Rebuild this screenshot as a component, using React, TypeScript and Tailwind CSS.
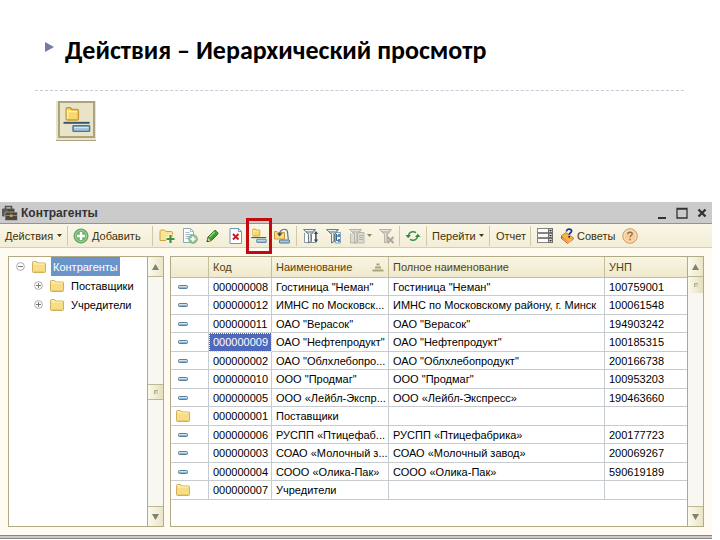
import type { ReactNode } from "react";
import clsx from "clsx";

type Row = {
  code: string;
  name: string;
  fullName?: string;
  unp?: string;
  isGroup?: boolean;
};

const rows: Row[] = [
  { code: "000000008", name: 'Гостиница "Неман"', fullName: 'Гостиница "Неман"', unp: "100759001" },
  { code: "000000012", name: "ИМНС по Московск...", fullName: "ИМНС по Московскому району, г. Минск", unp: "100061548" },
  { code: "000000011", name: 'ОАО "Верасок"', fullName: 'ОАО "Верасок"', unp: "194903242" },
  { code: "000000009", name: 'ОАО "Нефтепродукт"', fullName: 'ОАО "Нефтепродукт"', unp: "100185315" },
  { code: "000000002", name: 'ОАО "Облхлебопро...', fullName: 'ОАО "Облхлебопродукт"', unp: "200166738" },
  { code: "000000010", name: 'ООО "Продмаг"', fullName: 'ООО "Продмаг"', unp: "100953203" },
  { code: "000000005", name: "ООО «Лейбл-Экспр...", fullName: "ООО «Лейбл-Экспресс»", unp: "190463660" },
  { code: "000000001", name: "Поставщики", isGroup: true },
  { code: "000000006", name: "РУСПП «Птицефаб...", fullName: "РУСПП «Птицефабрика»", unp: "200177723" },
  { code: "000000003", name: "СОАО «Молочный з...", fullName: "СОАО «Молочный завод»", unp: "200069267" },
  { code: "000000004", name: "СООО «Олика-Пак»", fullName: "СООО «Олика-Пак»", unp: "590619189" },
  { code: "000000007", name: "Учредители", isGroup: true },
];

const selectedCode = "000000009";

function Svg({ children, size = 16 }: { children: ReactNode; size?: number }) {
  return (
    <svg width={size} height={size} viewBox="0 0 16 16" fill="none" aria-hidden="true" className="shrink-0">
      {children}
    </svg>
  );
}

function FolderIcon() {
  return (
    <Svg>
      <path d="M1.500 3.500q0-1 1-1h3l1.500 1.500h6.500q1 0 1 1v7.500q0 1-1 1h-11q-1 0-1-1z" fill="#f7de85" stroke="#cfae5c" />
      <path d="M2.500 5h11M2.500 3.800h3" stroke="#fdf2b8" />
      <path d="M2.500 12.500h11" stroke="#eccb70" />
    </Svg>
  );
}

function ItemIcon() {
  return (
    <Svg>
      <rect x="3.500" y="6.500" width="9" height="3" rx="1" fill="#8fb7d2" stroke="#55809f" />
      <path d="M4 7.500h8" stroke="#cfe3ef" />
    </Svg>
  );
}

function HierarchyIcon({ size }: { size?: number }) {
  return (
    <Svg size={size}>
      <path d="M1.800 1.800q0-.8.700-.8h1.800l.7 1h3q.8 0 .8.700v4.600q0 .7-.7.700h-5.500q-.8 0-.8-.7z" fill="#f6d968" stroke="#c79a35" strokeWidth=".8" />
      <path d="M2.500 3.200h5.600M2.600 2.200v5" stroke="#fff3b5" strokeWidth=".8" />
      <path d="M.3 9.600h14.900" stroke="#33566b" strokeWidth="1.100" />
      <rect x="5.700" y="11.300" width="9.500" height="3.200" rx=".4" fill="#9fc0db" stroke="#4c7692" strokeWidth=".8" />
      <path d="M6.300 12.300h8.200" stroke="#d3e5f2" strokeWidth=".7" />
    </Svg>
  );
}

function AddIcon() {
  return (
    <Svg>
      <circle cx="8" cy="8" r="7" fill="#6fb46b" stroke="#5a9a62" />
      <circle cx="8" cy="8" r="5.700" stroke="#a5d49c" />
      <path d="M8 4v8M4 8h8" stroke="#fff" strokeWidth="2.400" />
    </Svg>
  );
}

function FolderAddIcon() {
  return (
    <Svg>
      <path d="M1 3.500q0-1.500 1.300-1.500h3.200l1.500 1.500h5.500q1 0 1 1v8h-12.500z" fill="#f9e39a" stroke="#d0a03c" />
      <path d="M11.500 6.500v9M7 11h9" stroke="#fff8dd" strokeWidth="4" />
      <path d="M11.500 7v8M7.500 11h8" stroke="#3d9140" strokeWidth="2.200" />
    </Svg>
  );
}

function PageAddIcon() {
  return (
    <Svg>
      <path d="M1.500.5h7l3 3v11h-10z" fill="#fff" stroke="#8fa9b8" />
      <path d="M8.500.5v3h3M3.500 4.500h4M3.500 6.500h6M3.500 8.500h4M3.500 10.500h3" stroke="#a5bac6" />
      <circle cx="11" cy="11" r="4.300" fill="#9cc698" stroke="#7bab7d" />
      <path d="M11 8.500v5M8.500 11h5" stroke="#fff" strokeWidth="1.600" />
    </Svg>
  );
}

function PencilIcon() {
  return (
    <Svg>
      <path d="M2 13.500l1-4.500 6-6q1-1 2.200 0l1.300 1.300q1 1 0 2.200l-6 6z" fill="#3f9f35" stroke="#2d7429" />
      <path d="M4.500 9l5.200-5.200" stroke="#93d77c" strokeWidth="1.500" />
      <path d="M3 9.500l3.200 3.200L2 13.800z" fill="#ecd7a2" stroke="#466b35" strokeWidth=".6" />
      <path d="M2 14l.5-1.800 1.300 1.300z" fill="#222" />
    </Svg>
  );
}

function DeleteIcon() {
  return (
    <Svg>
      <path d="M2 .5h8.500l3 3v12h-11.500z" fill="#fff" stroke="#7296b4" />
      <path d="M10.500.5v3h3" stroke="#7296b4" />
      <path d="M5 6l5.500 5.500M10.500 6l-5.500 5.500" stroke="#c31f25" strokeWidth="2" />
    </Svg>
  );
}

function MoveIcon() {
  return (
    <Svg>
      <path d="M.5 3.500h2.500l1 1h6.500v6.500h-10z" fill="#f8dc83" stroke="#c99a3f" />
      <path d="M5.500 6.500c0-5 7-7.500 8-2.500l.8 7.500" stroke="#57778a" strokeWidth="1.200" />
      <path d="M3 5.200l2.500 3.300 3-3.300z" fill="#264b62" />
      <rect x="5.500" y="12" width="10" height="3" rx=".5" fill="#a9c9df" stroke="#4c7692" />
    </Svg>
  );
}

// shared funnel shape for the filter buttons
function Funnel({ muted }: { muted?: boolean }) {
  return (
    <>
      <path
        d="M.5 1.500h12l-4 5v7l-3 1.500V6.500z"
        fill={muted ? "#c4c4b9" : "#a3aeb0"}
        stroke={muted ? "#b3b3a6" : "#6f7e83"}
      />
      <path d="M2 2.500h8M6.500 5v8.500" stroke={muted ? "#e2e2d8" : "#e9eff0"} />
    </>
  );
}

function FilterSortIcon() {
  return (
    <Svg>
      <path d="M1.500 5v9.500h11V5" fill="#fff" stroke="#8496a0" />
      <Funnel />
      <path d="M13 4v9" stroke="#2f4c5c" strokeWidth="1.200" />
      <path d="M10.900 6L13 3l2.100 3zM10.900 11.500h4.200L13 14.800z" fill="#2f4c5c" />
    </Svg>
  );
}

function FilterItemIcon() {
  return (
    <Svg>
      <path d="M9.500 4.500h5v10.500h-5z" fill="#eaf3f9" stroke="#7fa6c0" />
      <Funnel />
      <path d="M10.500 6v6.500h2M10.500 8h2" stroke="#3e6580" />
      <rect x="12" y="6" width="2" height="3" fill="#4c8fbd" />
      <rect x="12" y="11" width="2" height="3" fill="#4c8fbd" />
    </Svg>
  );
}

function FilterHistoryIcon() {
  return (
    <Svg>
      <path d="M8.500 4.500h6.500v10.500h-13.500v-9.500" fill="#dcdcd2" stroke="#b7b7aa" />
      <Funnel muted />
      <path d="M10 7.500h4M10 9.500h4M10 11.500h4" stroke="#b0b0a4" />
    </Svg>
  );
}

function FilterOffIcon() {
  return (
    <Svg>
      <Funnel muted />
      <path d="M8.500 9l6 6M14.500 9l-6 6" stroke="#b3a29f" strokeWidth="2" />
    </Svg>
  );
}

function RefreshIcon() {
  return (
    <Svg>
      <path d="M3.500 7.500c.5-3.500 4.500-4.800 7.500-2.800M12.500 8.500c-.5 3.500-4.500 4.800-7.500 2.800" stroke="#3c9147" strokeWidth="1.600" />
      <path d="M.500 7h5.400L3.200 10.300zM10.100 9h5.400L12.800 5.700z" fill="#2f8a3c" />
    </Svg>
  );
}

function ListIcon() {
  return (
    <Svg>
      {[0, 5, 10].map((y) => (
        <g key={y}>
          <rect x=".5" y={y + 0.5} width="15" height="4" fill="#fff" stroke="#858585" />
          <rect x="11.500" y={y + 0.5} width="4" height="4" fill="#c9c9c9" stroke="#6f6f6f" />
          <path d={`M12.200 ${y + 2}h2.600l-1.300 1.500z`} fill="#222" />
        </g>
      ))}
    </Svg>
  );
}

function TipsIcon() {
  return (
    <Svg>
      <path d="M1 8l5-3.500 7.500 5.500-5.500 4.500z" fill="#f6b53b" stroke="#d98324" />
      <path d="M1 8v2.500l6.500 5.200 6-4.200V10L8 14z" fill="#d5441f" />
      <path d="M2 10l5.800 4.500 5-3.600" stroke="#fff0c9" strokeWidth=".8" />
      <path d="M6.500 3.500c0-3.500 5.500-3 5-.2-.3 1.600-2.300 1.700-2.300 3.500M9.200 8v1.800" stroke="#1b2f9c" strokeWidth="1.800" />
    </Svg>
  );
}

function HelpIcon() {
  return (
    <Svg>
      <circle cx="8" cy="8" r="7.300" fill="#f8cd9c" stroke="#d29a63" />
      <circle cx="8" cy="8" r="5.900" stroke="#fde2bd" />
      <path d="M5.800 6.300c0-3.200 4.700-2.700 4.400-.3-.2 1.400-2.200 1.500-2.200 3.300M8 10.700v1.500" stroke="#7d6248" strokeWidth="1.200" />
    </Svg>
  );
}

function BriefcaseIcon() {
  return (
    <Svg>
      <path d="M3.500 4.500V1.500h6v3" stroke="#55524b" strokeWidth="1.500" />
      <rect x="0" y="3.500" width="12.500" height="8" rx="1" fill="#5c5850" />
      <path d="M6.500 7.500V5.500h5v2" stroke="#403d37" strokeWidth="1.300" />
      <rect x="3" y="7" width="12.500" height="8.500" rx="1" fill="#4a4741" stroke="#cbcbcb" strokeWidth=".6" />
      <path d="M3.500 10.500h11.500" stroke="#8b857a" />
      <rect x="8" y="9.500" width="2.500" height="2.500" fill="#d8a33c" />
    </Svg>
  );
}

function ExpandIcon({ open }: { open?: boolean }) {
  return (
    <svg width="9" height="9" viewBox="0 0 9 9" fill="none" aria-hidden="true" className="shrink-0">
      <circle cx="4.500" cy="4.500" r="3.900" fill="#fff" stroke="#a3a3a3" strokeWidth=".9" />
      <path d={open ? "M2 4.500h5" : "M2 4.500h5M4.500 2v5"} stroke="#777" />
    </svg>
  );
}

function Caret({ muted }: { muted?: boolean }) {
  return (
    <svg width="5" height="3" viewBox="0 0 5 3" aria-hidden="true" className="shrink-0">
      <path d="M0 0h5L2.500 3z" fill={muted ? "#8f8358" : "#4a3b0a"} />
    </svg>
  );
}

function ToolGroup({ children, className }: { children: ReactNode; className?: string }) {
  return <div className={clsx("flex h-5 shrink-0 items-center gap-[7px] border-r border-[#cfc9a6]", className)}>{children}</div>;
}

function ToolButton({ children, label, className }: { children: ReactNode; label?: string; className?: string }) {
  return (
    <button type="button" aria-label={label} className={clsx("flex shrink-0 items-center whitespace-nowrap", className)}>
      {children}
    </button>
  );
}

function ScrollArrow({ down }: { down?: boolean }) {
  return (
    <button
      type="button"
      aria-label={down ? "Вниз" : "Вверх"}
      className={clsx(
        "flex h-5 w-full shrink-0 items-center justify-center border-[#bdb894] bg-linear-to-r from-[#fbf9ec] to-[#ebe5c8]",
        down ? "border-t" : "border-b"
      )}
    >
      <svg width="7" height="6" viewBox="0 0 7 6" aria-hidden="true">
        <path d={down ? "M0 0h7L3.500 6z" : "M0 6h7L3.500 0z"} fill="#82806f" />
      </svg>
    </button>
  );
}

function ScrollBar({ middle }: { middle?: boolean }) {
  return (
    <div className="flex w-4 shrink-0 flex-col border-l border-[#b0ab85] bg-[#f8f7f1]">
      <ScrollArrow />
      {middle && <div className="grow-5" />}
      <div
        className={clsx(
          "flex h-4 shrink-0 items-center justify-center bg-linear-to-r from-[#fbf9ec] to-[#e6dfbd]",
          middle && "border-y border-[#bdb894]"
        )}
      >
        <span className="size-1 border-t border-l border-[#b5af8c] bg-[#d8d3b4]" />
      </div>
      <div className="grow-5" />
      <ScrollArrow down />
    </div>
  );
}

function TreeItem({ label, open, selected, className }: { label: string; open?: boolean; selected?: boolean; className?: string }) {
  return (
    <li className={clsx("flex h-[19px] items-center", className)}>
      <ExpandIcon open={open} />
      <span className="ml-[6px] flex">
        <FolderIcon />
      </span>
      <span
        className={clsx(
          "ml-1 flex h-[19px] items-center px-[2px] text-[11px] leading-4",
          selected && "bg-[#6b94cb] text-white"
        )}
      >
        {label}
      </span>
    </li>
  );
}

function CounterpartyTable() {
  const head = "border-r border-b border-[#c5bf98] px-1 text-left font-normal text-[#55430a]";
  const cell = "border-r border-b border-[#c6ccd0] px-1 whitespace-nowrap overflow-hidden";

  return (
    <table className="w-full table-fixed border-separate border-spacing-0 text-[11px] leading-4">
      <colgroup>
        <col className="w-[38px]" />
        <col className="w-[63px]" />
        <col className="w-[117px]" />
        <col />
        <col className="w-[82px]" />
      </colgroup>
      <thead>
        <tr className="h-[21px] bg-linear-to-b from-[#f8f5e3] to-[#efe8cc]">
          <th className={head} aria-label="Вид" />
          <th className={head}>Код</th>
          <th className={head}>
            <span className="flex items-center justify-between">
              Наименование
              <svg width="12" height="9" viewBox="0 0 12 9" aria-hidden="true">
                <path d="M4.500 1.500h3M3 4.500h6M.500 7.500h11" stroke="#aaa37a" strokeWidth="2" />
              </svg>
            </span>
          </th>
          <th className={head}>Полное наименование</th>
          <th className="border-b border-[#c5bf98] px-1 text-left font-normal text-[#55430a]">УНП</th>
        </tr>
      </thead>
      <tbody>
        {rows.map((row) => {
          const isSelected = row.code === selectedCode;
          return (
            <tr key={row.code} className="h-[19px] odd:h-[18px]">
              <td className={cell}>
                {row.isGroup ? <FolderIcon /> : <ItemIcon />}
              </td>
              <td className={clsx(cell, isSelected && "bg-[#4f69bd] text-white outline-1 -outline-offset-1 outline-dotted outline-white")}>
                {row.code}
              </td>
              <td className={cell}>{row.name}</td>
              <td className={cell}>{row.fullName}</td>
              <td className="border-b border-[#c6ccd0] px-1">{row.unp}</td>
            </tr>
          );
        })}
      </tbody>
    </table>
  );
}

export default function App() {
  return (
    <main className="bg-white font-['Liberation_Sans',sans-serif] text-black">
      <header className="h-[202px] pt-[34px] pr-9 pl-[35px]">
        <div className="flex h-[57px] gap-[11px] border-b border-dashed border-[#c3ccd9] pl-[10px]">
          <svg width="9" height="10" viewBox="0 0 9 10" aria-hidden="true" className="mt-2 shrink-0">
            <path d="M0 0l9 5-9 5z" fill="#727ca3" />
          </svg>
          <h1 className="font-[Carlito,Lato,sans-serif] text-[26px] leading-8 font-bold whitespace-nowrap">
            Действия – Иерархический просмотр
          </h1>
        </div>
        <button
          type="button"
          aria-label="Иерархический просмотр"
          className="mt-[10px] ml-[21px] block size-10 border-b border-[#aaa37d] bg-[#e9e3ca] pr-px pb-[2px] pl-[2px]"
        >
          <span className="flex h-full items-center justify-center border-2 border-[#aaa37d]">
            <HierarchyIcon size={28} />
          </span>
        </button>
      </header>

      <section className="mr-2 bg-[#fffbf0]">
        <div className="flex h-[22px] items-center border-b border-[#96948a] bg-[#cbcbcb] pr-1 pl-[2px]">
          <BriefcaseIcon />
          <h2 className="ml-[3px] grow text-[12px] leading-4 font-bold text-[#333]">Контрагенты</h2>
          <div className="flex items-center gap-2 text-[#333]">
            {[
              { label: "Свернуть", d: "M2 11h8", w: 2 },
              { label: "Развернуть", d: "M1 1.500h10v9.500H1zM1 2h10", w: 1.3 },
              { label: "Закрыть", d: "M2.500 2.500l7 7M9.500 2.500l-7 7", w: 2.4 },
            ].map((item) => (
              <button key={item.label} type="button" aria-label={item.label}>
                <svg width="12" height="12" viewBox="0 0 12 12" fill="none" aria-hidden="true">
                  <path d={item.d} stroke="currentColor" strokeWidth={item.w} />
                </svg>
              </button>
            ))}
          </div>
        </div>

        <div className="flex h-6 items-center border-b border-[#d5cfad] bg-linear-to-b from-[#faf7e8] to-[#f2edd6] text-[11px] leading-4 text-[#3f3208]">
          <ToolGroup className="w-[68px] pl-[5px]">
            <ToolButton className="gap-1">
              Действия
              <Caret />
            </ToolButton>
          </ToolGroup>
          <ToolGroup className="w-[85px] pl-[5px]">
            <ToolButton className="gap-[3px]">
              <AddIcon />
              <span>
                <u>Д</u>обавить
              </span>
            </ToolButton>
          </ToolGroup>
          <ToolGroup className="w-[144px] pl-[6px]">
            <ToolButton label="Новая группа"><FolderAddIcon /></ToolButton>
            <ToolButton label="Скопировать"><PageAddIcon /></ToolButton>
            <ToolButton label="Изменить"><PencilIcon /></ToolButton>
            <ToolButton label="Пометить на удаление"><DeleteIcon /></ToolButton>
            <ToolButton label="Иерархический просмотр" className="relative">
              <HierarchyIcon />
              <span className="absolute -inset-x-[5px] -inset-y-[10px] border-3 border-[#c00c10]" />
            </ToolButton>
            <ToolButton label="Переместить в группу"><MoveIcon /></ToolButton>
          </ToolGroup>
          <ToolGroup className="w-[103px] pl-[6px]">
            <ToolButton label="Отбор и сортировка"><FilterSortIcon /></ToolButton>
            <ToolButton label="Отбор по значению"><FilterItemIcon /></ToolButton>
            <ToolButton label="История отборов" className="gap-[2px]">
              <FilterHistoryIcon />
              <Caret muted />
            </ToolButton>
            <ToolButton label="Отключить отбор"><FilterOffIcon /></ToolButton>
          </ToolGroup>
          <ToolGroup className="w-[27px] pl-[5px]">
            <ToolButton label="Обновить"><RefreshIcon /></ToolButton>
          </ToolGroup>
          <ToolGroup className="w-[63px] pl-[5px]">
            <ToolButton className="gap-[3px]">
              Перейти
              <Caret />
            </ToolButton>
          </ToolGroup>
          <ToolGroup className="w-[41px] pl-[6px]">
            <ToolButton>Отчет</ToolButton>
          </ToolGroup>
          <div className="flex items-center gap-[7px] pl-[6px]">
            <ToolButton label="Настройка списка"><ListIcon /></ToolButton>
            <ToolButton className="gap-px">
              <TipsIcon />
              Советы
            </ToolButton>
            <ToolButton label="Справка"><HelpIcon /></ToolButton>
          </div>
        </div>

        <div className="flex gap-[6px] px-2 py-2">
          <div className="flex w-[156px] shrink-0 border border-[#b0ab85] bg-white">
            <ul className="grow overflow-hidden pl-[7px]">
              <TreeItem label="Контрагенты" open selected />
              <TreeItem label="Поставщики" className="pl-[18px]" />
              <TreeItem label="Учредители" className="pl-[18px]" />
            </ul>
            <ScrollBar middle />
          </div>
          <div className="flex min-w-0 grow border border-[#b0ab85] bg-white">
            <div className="min-w-0 grow pb-[26px]">
              <CounterpartyTable />
            </div>
            <ScrollBar />
          </div>
        </div>
        <div className="h-1 border-y border-[#858585] bg-[#cbcbcb]" />
      </section>
    </main>
  );
}
